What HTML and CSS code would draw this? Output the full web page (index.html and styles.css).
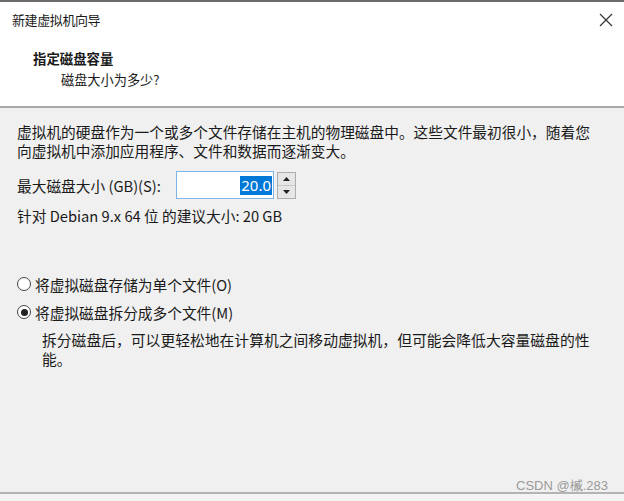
FILE: index.html
```html
<!DOCTYPE html>
<html lang="zh">
<head>
<meta charset="utf-8">
<link rel="stylesheet" href="styles.css">
</head>
<body>
<div class="win">
  <div class="top">
    <div class="titlebar">
      <span class="title">新建虚拟机向导</span>
      <svg class="close" width="14" height="14" viewBox="0 0 14 14"><path d="M1 1 L13 13 M13 1 L1 13" stroke="#333" stroke-width="1.2" fill="none"/></svg>
    </div>
    <div class="head">
      <div class="h1">指定磁盘容量</div>
      <div class="h2">磁盘大小为多少?</div>
    </div>
  </div>
  <div class="body">
    <p class="para">虚拟机的硬盘作为一个或多个文件存储在主机的物理磁盘中。这些文件最初很小，随着您<br>向虚拟机中添加应用程序、文件和数据而逐渐变大。</p>
    <div class="row">
      <span class="lbl">最大磁盘大小 (GB)(S):</span>
      <div class="input"><span class="sel">20.0</span></div>
      <div class="spin">
        <div class="sb"><svg width="7" height="4" viewBox="0 0 7 4"><path d="M0 4 L3.5 0 L7 4Z" fill="#222"/></svg></div>
        <div class="sb"><svg width="7" height="4" viewBox="0 0 7 4"><path d="M0 0 L3.5 4 L7 0Z" fill="#222"/></svg></div>
      </div>
    </div>
    <div class="rec">针对 Debian 9.x 64 位 的建议大小: 20 GB</div>
    <div class="radios">
      <div class="radio"><span class="circ"></span>将虚拟磁盘存储为单个文件(O)</div>
      <div class="radio"><span class="circ on"></span>将虚拟磁盘拆分成多个文件(M)</div>
      <p class="desc">拆分磁盘后，可以更轻松地在计算机之间移动虚拟机，但可能会降低大容量磁盘的性<br>能。</p>
    </div>
    <div class="wm">CSDN @楲.283</div>
  </div>
  <div class="foot"></div>
</div>
</body>
</html>
```
FILE: styles.css
```css
html, body { margin: 0; padding: 0; }
body {
  width: 624px; height: 501px; overflow: hidden;
  font-family: "Noto Sans CJK SC", "Noto Sans", sans-serif;
  color: #1a1a1a;
  background: #f0f0f0;
}
.win { display: flex; flex-direction: column; height: 501px; }
.top {
  background: #fff;
  border-top: 2px solid #6b6b6b;
  border-bottom: 2px solid #a8a8a8;
  height: 104px;
  box-sizing: content-box;
}
.titlebar {
  display: flex; align-items: center; justify-content: space-between;
  height: 34px; padding: 0 11px 0 12px;
}
.title { font-size: 13px; letter-spacing: -0.4px; }
.close { margin-top: 2px; }
.head { padding: 12px 0 0 33px; }
.h1 { font-size: 13.4px; font-weight: bold; line-height: 21px; }
.h2 { font-size: 13.2px; line-height: 21px; padding-left: 28px; }
.body { flex: 1; display: flex; flex-direction: column; padding: 14px 0 0 17px; position: relative; }
.para { margin: 0; font-size: 14.7px; line-height: 19px; letter-spacing: 0; }
.row { display: flex; align-items: center; margin-top: 11px; height: 28px; }
.lbl { font-size: 14.7px; width: 159px; }
.input {
  width: 95px; height: 26px; border: 1px solid #7eb4ea; background: #fff;
  display: flex; align-items: center; justify-content: flex-end; padding-right: 1px;
}
.sel { background: #0078d7; color: #fff; font-family: "Noto Sans", sans-serif; font-size: 15px; line-height: 19px; padding: 0 1px; }
.spin { margin-left: 3px; width: 19px; height: 27px; display: flex; flex-direction: column; border: 1px solid #adadad; background: #e6e6e6; box-sizing: border-box; }
.sb { flex: 1; display: flex; align-items: center; justify-content: center; }
.sb + .sb { border-top: 1px solid #c8c8c8; }
.rec { font-size: 14.7px; margin-top: 6px; line-height: 21px; }
.radios { margin-top: 44px; }
.radio { display: flex; align-items: center; font-size: 14.7px; height: 28px; }
.circ {
  width: 14px; height: 14px; border: 1px solid #444; border-radius: 50%;
  background: #fff; margin-right: 4px; box-sizing: border-box; position: relative;
}
.circ.on::after {
  content: ""; position: absolute; left: 2.5px; top: 2.5px; width: 7px; height: 7px;
  border-radius: 50%; background: #222;
}
.desc { margin: 4px 0 0 25px; font-size: 14.8px; line-height: 19px; }
.wm {
  position: absolute; right: 16px; bottom: -3px;
  font-family: "Liberation Sans", sans-serif; font-size: 13px; color: #9a9a9a;
}
.foot { height: 7px; border-top: 2px solid #b4b4b4; background: #f4f4f4; }
```
